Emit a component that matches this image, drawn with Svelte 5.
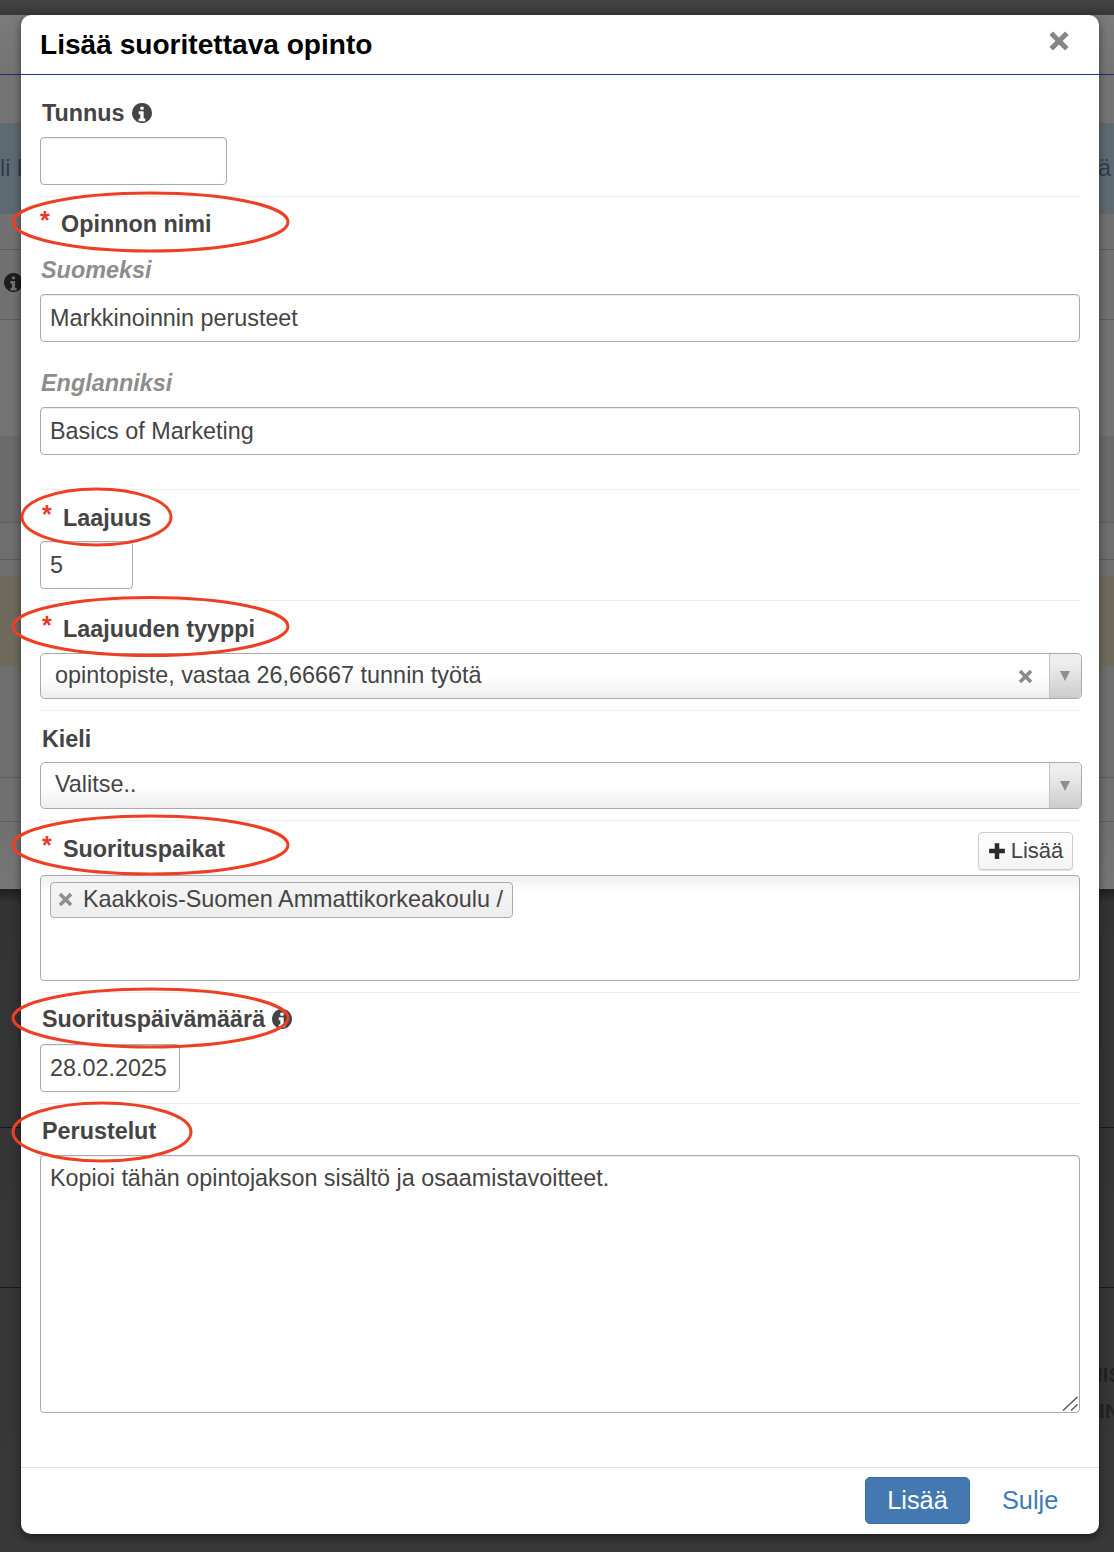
<script>
	const infoPath =
		'M1024 1376v-160q0-14-9-23t-23-9h-96v-512q0-14-9-23t-23-9h-320q-14 0-23 9t-9 23v160q0 14 9 23t23 9h96v320h-96q-14 0-23 9t-9 23v160q0 14 9 23t23 9h448q14 0 23-9t9-23zm-128-896v-160q0-14-9-23t-23-9h-192q-14 0-23 9t-9 23v160q0 14 9 23t23 9h192q14 0 23-9t9-23zm640 288q0 209-103 385.5t-279.5 279.5-385.5 103-385.5-103-279.5-279.5-103-385.5 103-385.5 279.5-279.5 385.5-103 385.5 103 279.5 279.5 103 385.5z';
	const timesPath = 'M2 5 5 2l5 5 5-5 3 3-5 5 5 5-3 3-5-5-5 5-3-3 5-5z';

	// hand drawn rings around the required fields
	const rings = [
		{ cx: 150.5, cy: 222, rx: 137.5, ry: 29 },
		{ cx: 96.5, cy: 517, rx: 74.5, ry: 28 },
		{ cx: 150.5, cy: 626.5, rx: 137.5, ry: 29 },
		{ cx: 150.5, cy: 845, rx: 137.5, ry: 29 },
		{ cx: 150.5, cy: 1018, rx: 137.5, ry: 29 },
		{ cx: 102, cy: 1132, rx: 89, ry: 29 }
	];
</script>

<div class="page">
	<div class="bar"></div>
	<div class="row r1"></div>
	<div class="row r2"></div>
	<div class="row blue"><span>li k</span><span>ä</span></div>
	<div class="row r3"></div>
	<div class="row r4">
		<svg class="bg-info" viewBox="0 0 1536 1536"><path fill-rule="evenodd" d={infoPath} /></svg>
	</div>
	<div class="row r5"></div>
	<div class="row r6"></div>
	<div class="row r7"></div>
	<div class="row r8"></div>
	<div class="row yellow"></div>
	<div class="row r9"></div>
	<div class="row r10"></div>
	<div class="row r11"></div>
	<div class="dark">
		<div class="d1"></div>
		<div class="d2"></div>
		<div class="d3"><b class="mis">MIS</b><b class="ins">IN</b></div>
	</div>
</div>

<div class="modal">
	<header class="head">
		<h4>Lisää suoritettava opinto</h4>
		<svg class="close" viewBox="0 0 20 20"><path d={timesPath} /></svg>
	</header>

	<div class="body">
		<section class="group g1">
			<div class="label">
				Tunnus
				<svg class="info" viewBox="0 0 1536 1536"><path fill-rule="evenodd" d={infoPath} /></svg>
			</div>
			<input class="field w-tunnus" type="text" value="" />
		</section>

		<section class="group g2">
			<div class="label first"><span class="req">*</span>Opinnon nimi</div>
			<div class="sub sub-fi">Suomeksi</div>
			<input class="field full" type="text" value="Markkinoinnin perusteet" />
			<div class="sub sub-en">Englanniksi</div>
			<input class="field full" type="text" value="Basics of Marketing" />
		</section>

		<section class="group g3">
			<div class="label"><span class="req">*</span>Laajuus</div>
			<input class="field w-laajuus" type="text" value="5" />
		</section>

		<section class="group g4">
			<div class="label"><span class="req">*</span>Laajuuden tyyppi</div>
			<div class="select h46">
				<span class="value">opintopiste, vastaa 26,66667 tunnin työtä</span>
				<svg class="clear" viewBox="0 0 20 20"><path d={timesPath} /></svg>
				<span class="arrow"><i></i></span>
			</div>
		</section>

		<section class="group g5">
			<div class="label">Kieli</div>
			<div class="select h47">
				<span class="value">Valitse..</span>
				<span class="arrow"><i></i></span>
			</div>
		</section>

		<section class="group g6">
			<div class="label-row">
				<div class="label"><span class="req">*</span>Suorituspaikat</div>
				<button class="add" type="button">
					<svg viewBox="0 0 16 16"><path d="M6 1h4v5h5v4h-5v5H6v-5H1V6h5z" /></svg>
					Lisää
				</button>
			</div>
			<div class="tags">
				<span class="tag">
					<svg viewBox="0 0 20 20"><path d={timesPath} /></svg>
					Kaakkois-Suomen Ammattikorkeakoulu /
				</span>
			</div>
		</section>

		<section class="group g7">
			<div class="label">
				Suorituspäivämäärä
				<svg class="info" viewBox="0 0 1536 1536"><path fill-rule="evenodd" d={infoPath} /></svg>
			</div>
			<input class="field w-date" type="text" value="28.02.2025" />
		</section>

		<section class="group g8">
			<div class="label">Perustelut</div>
			<div class="area-wrap">
				<textarea class="area">Kopioi tähän opintojakson sisältö ja osaamistavoitteet.</textarea>
				<svg class="grip" viewBox="0 0 16 15">
					<path d="M1 14.5 15.5 1M9 14.5 15.5 8.5" />
				</svg>
			</div>
		</section>
	</div>

	<footer class="foot">
		<button class="primary" type="button">Lisää</button>
		<button class="link" type="button">Sulje</button>
	</footer>
</div>

<svg class="rings" viewBox="0 0 1114 1552">
	{#each rings as r}
		<ellipse cx={r.cx} cy={r.cy} rx={r.rx} ry={r.ry} />
	{/each}
</svg>

<style>
	:global(body) {
		margin: 0;
		background: #383838;
		font-family: 'Liberation Sans', Arial, sans-serif;
	}
	:global(#app) {
		position: relative;
		width: 1114px;
		height: 1552px;
		overflow: hidden;
	}

	/* greyed out page behind the dialog */
	.page {
		position: absolute;
		inset: 0;
		display: flex;
		flex-direction: column;
		overflow: hidden;
	}
	.bar {
		height: 15px;
		background: linear-gradient(#444, #383838);
	}
	.row {
		flex: none;
		background: #737373;
		border-bottom: 1px solid #5e5e5e;
		box-sizing: border-box;
	}
	.r1 {
		height: 60px;
		border-bottom-color: #1f2f6b;
		background: linear-gradient(#7a7a7a, #747474);
	}
	.r2 {
		height: 48px;
		background: #747474;
		border-bottom: 0;
	}
	.blue {
		height: 91px;
		background: #5e6a71;
		border-bottom: 0;
		display: flex;
		justify-content: space-between;
		align-items: center;
		padding-right: 3px;
		font-size: 23.4px;
		color: #2c3f4d;
		line-height: 89px;
	}
	.r3 {
		height: 36px;
		background: #717171;
	}
	.r4 {
		height: 70px;
		background: #707070;
		display: flex;
		align-items: center;
		padding-left: 4px;
	}
	.bg-info {
		width: 19px;
		height: 19px;
		margin-top: -4px;
		fill: #1d1d1d;
	}
	.r5 {
		height: 116px;
		background: #737373;
		border-bottom: 0;
	}
	.r6 {
		height: 87px;
		background: #6b6b6b;
	}
	.r7 {
		height: 37px;
		background: #6e6e6e;
	}
	.r8 {
		height: 16px;
		background: #6e6e6e;
		border-bottom: 0;
	}
	.yellow {
		height: 90px;
		background: #6f6b5c;
		border-bottom: 0;
	}
	.r9 {
		height: 112px;
		background: #6e6e6e;
	}
	.r10 {
		height: 44px;
		background: #707070;
	}
	.r11 {
		height: 67px;
		background: linear-gradient(#707070, #767676);
		border-bottom: 0;
	}
	.dark {
		flex: 1;
		background: linear-gradient(#1f1f1f, #333 14px, #383838);
	}
	.d1 {
		height: 238px;
		border-bottom: 1px solid #14182e;
	}
	.d2 {
		height: 159px;
		border-bottom: 1px solid #14182e;
	}
	.d3 {
		position: relative;
	}
	.mis,
	.ins {
		position: absolute;
		font-size: 21px;
		color: #222;
		line-height: 24px;
		white-space: nowrap;
	}
	.mis {
		left: 1085px;
		top: 75px;
	}
	.ins {
		left: 1099px;
		top: 111px;
	}

	/* dialog */
	.modal {
		position: absolute;
		left: 21px;
		top: 15px;
		width: 1078px;
		background: #fff;
		border-radius: 10px;
		box-shadow: 0 3px 9px rgba(0, 0, 0, 0.5);
		color: #444;
		display: flex;
		flex-direction: column;
	}
	.head {
		height: 59px;
		box-sizing: content-box;
		border-bottom: 1px solid #1f3a93;
		display: flex;
		justify-content: space-between;
		align-items: flex-start;
		padding: 0 28px 0 19px;
	}
	h4 {
		margin: 0;
		padding-top: 13px;
		font-size: 28.1px;
		line-height: 33px;
		font-weight: 700;
		color: #000;
	}
	.close {
		width: 24px;
		height: 24px;
		margin-top: 14px;
		fill: #868686;
	}
	.body {
		padding: 0 19px;
		display: flex;
		flex-direction: column;
	}
	.group {
		border-bottom: 1px solid #eee;
		display: flex;
		flex-direction: column;
		align-items: flex-start;
		padding-bottom: 11px;
	}
	.label {
		font-size: 23.35px;
		line-height: 28px;
		font-weight: 700;
		margin-left: 2px;
		display: flex;
		align-items: center;
		gap: 7px;
		white-space: nowrap;
		color: #444;
	}
	.label.first {
		margin-left: 0;
	}
	.req {
		color: #e8392a;
		font-size: 25px;
		width: 14px;
		align-self: flex-start;
		line-height: 20px;
	}
	.info {
		width: 20px;
		height: 20px;
		fill: #444;
		margin-top: -1px;
	}
	.sub {
		font-size: 23.4px;
		line-height: 28px;
		font-weight: 700;
		font-style: italic;
		color: #8d8d8d;
		margin-left: 1px;
	}
	.field,
	.area {
		display: block;
		box-sizing: border-box;
		border: 1px solid #aaa;
		border-radius: 4px;
		background: #fff;
		box-shadow: inset 0 1px 1px rgba(0, 0, 0, 0.075);
		font: inherit;
		font-size: 23.35px;
		color: #444;
		outline: 0;
		margin: 0;
	}
	.field {
		height: 48px;
		padding: 0 9px;
	}
	.full {
		width: 100%;
	}
	.w-tunnus {
		width: 187px;
	}
	.w-laajuus {
		width: 93px;
	}
	.w-date {
		width: 140px;
	}

	.g1 {
		padding-top: 24px;
	}
	.g1 .label {
		margin-bottom: 10px;
	}
	.g2 {
		padding-top: 13px;
		padding-bottom: 34px;
	}
	.sub-fi {
		margin-top: 18px;
		margin-bottom: 10px;
	}
	.sub-en {
		margin-top: 27px;
		margin-bottom: 10px;
	}
	.g3,
	.g4,
	.g5 {
		padding-top: 14px;
	}
	.g3 .label,
	.g5 .label {
		margin-bottom: 9px;
	}
	.g4 .label {
		margin-bottom: 10px;
	}
	.g6 {
		padding-top: 11px;
	}
	.g7 {
		padding-top: 12px;
	}
	.g7 .label {
		margin-bottom: 11px;
	}
	.g8 {
		padding-top: 13px;
		padding-bottom: 54px;
		border-bottom: 0;
	}
	.g8 .label {
		margin-bottom: 10px;
	}

	/* chosen style selects */
	.select {
		box-sizing: border-box;
		width: calc(100% + 2px);
		margin-right: -2px;
		display: flex;
		align-items: stretch;
		border: 1px solid #aaa;
		border-radius: 5px;
		background: linear-gradient(#fff 50%, #eee);
		font-size: 23.4px;
		color: #444;
	}
	.h46 {
		height: 46px;
	}
	.h47 {
		height: 47px;
	}
	.value {
		flex: 1;
		padding-left: 14px;
		line-height: 43px;
	}
	.clear {
		width: 17px;
		height: 17px;
		align-self: center;
		margin-right: 15px;
		fill: #8c8c8c;
	}
	.arrow {
		width: 31px;
		border-left: 1px solid #c4c4c4;
		border-radius: 0 5px 5px 0;
		background: linear-gradient(#eee 20%, #ccc);
		display: flex;
		align-items: center;
		justify-content: center;
	}
	.arrow i {
		width: 0;
		height: 0;
		margin-right: 2px;
		border-left: 5.5px solid transparent;
		border-right: 5.5px solid transparent;
		border-top: 10px solid #8f8f8f;
	}

	.label-row {
		width: 100%;
		height: 38px;
		display: flex;
		justify-content: space-between;
		align-items: flex-start;
	}
	.label-row .label {
		margin-top: 3px;
	}
	.add {
		box-sizing: border-box;
		height: 38px;
		width: 95px;
		margin-right: 7px;
		padding: 0;
		border: 1px solid #ccc;
		border-radius: 4px;
		background: linear-gradient(#fff, #f4f4f4);
		box-shadow: 0 1px 1px rgba(0, 0, 0, 0.12);
		font: inherit;
		font-size: 22px;
		color: #444;
		display: flex;
		align-items: center;
		justify-content: center;
		gap: 5px;
	}
	.add svg {
		width: 18px;
		height: 18px;
		fill: #2b2b2b;
	}
	.tags {
		box-sizing: border-box;
		width: 100%;
		height: 106px;
		margin-top: 5px;
		padding: 6px 9px;
		border: 1px solid #aaa;
		border-radius: 4px;
		background: linear-gradient(#f0f0f0, #fff 18px);
	}
	.tag {
		display: inline-flex;
		align-items: center;
		gap: 9px;
		box-sizing: border-box;
		height: 36px;
		padding: 0 9px 2px 6px;
		border: 1px solid #aaa;
		border-radius: 4px;
		background: linear-gradient(#f4f4f4, #eee);
		font-size: 23.4px;
		white-space: nowrap;
	}
	.tag svg {
		width: 17px;
		height: 17px;
		fill: #8f8f8f;
	}

	.area-wrap {
		position: relative;
		width: 100%;
	}
	.area {
		width: 100%;
		height: 258px;
		padding: 8px 9px;
		line-height: 28px;
		resize: none;
	}
	.grip {
		position: absolute;
		right: 2px;
		bottom: 2px;
		width: 16px;
		height: 15px;
		fill: none;
		stroke: #555;
		stroke-width: 1.4;
	}

	.foot {
		border-top: 1px solid #e5e5e5;
		padding: 9px 42px 10px 0;
		display: flex;
		justify-content: flex-end;
		align-items: center;
		gap: 32px;
	}
	.foot button {
		font: inherit;
		font-size: 25.3px;
		border-radius: 5px;
		padding: 0;
		height: 47px;
	}
	.primary {
		width: 105px;
		background: #4379b0;
		border: 1px solid #3a6da3;
		color: #fff;
	}
	.link {
		width: 55px;
		background: none;
		border: 0;
		color: #3f7ab8;
	}

	.rings {
		position: absolute;
		inset: 0;
		width: 1114px;
		height: 1552px;
		pointer-events: none;
	}
	.rings ellipse {
		fill: none;
		stroke: #ee3f25;
		stroke-width: 3;
	}
</style>
